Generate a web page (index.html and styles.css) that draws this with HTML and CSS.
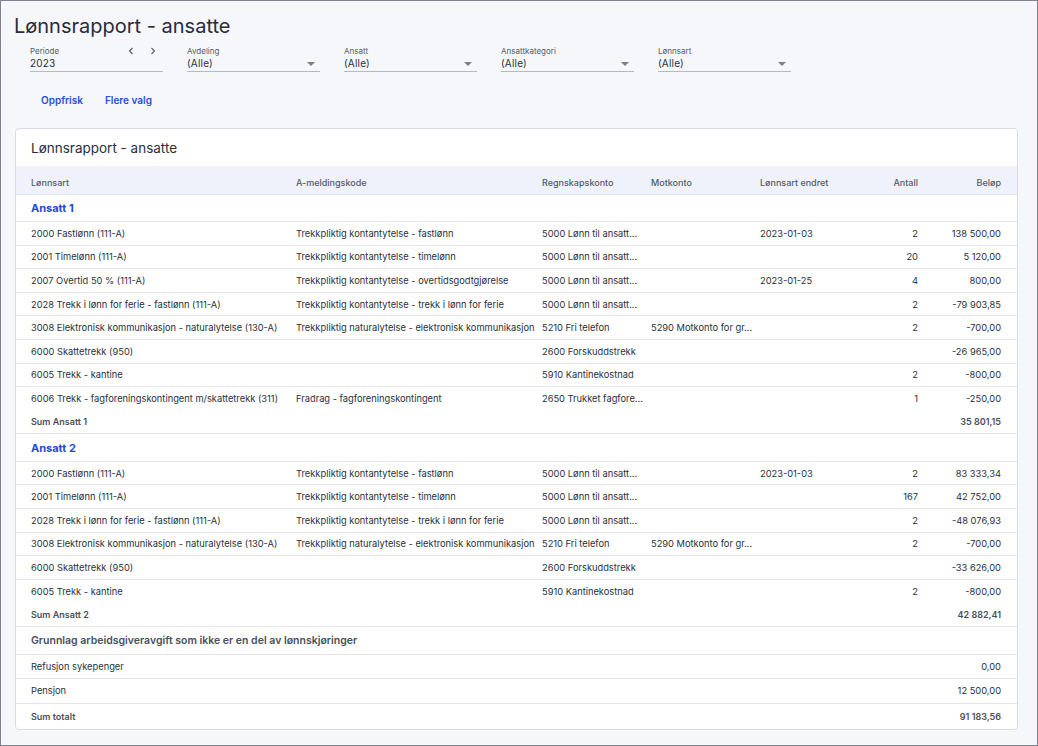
FILE: index.html
```html
<!DOCTYPE html>
<html lang="no">
<head>
<meta charset="utf-8">
<title>Lønnsrapport - ansatte</title>
<link rel="stylesheet" href="styles.css">
</head>
<body>
<div class="frame">
  <h1 class="page-title">Lønnsrapport - ansatte</h1>
  <div class="filters">
    <div class="field">
      <div class="field-label-row">
        <span class="field-label">Periode</span>
        <span class="nav">
          <svg width="6" height="8" viewBox="0 0 6 8"><path d="M4.5 1 L1.5 4 L4.5 7" fill="none" stroke="#555a66" stroke-width="1.1"/></svg>
          <svg width="6" height="8" viewBox="0 0 6 8"><path d="M1.5 1 L4.5 4 L1.5 7" fill="none" stroke="#555a66" stroke-width="1.1"/></svg>
        </span>
      </div>
      <div class="field-value">2023</div>
    </div>
    <div class="field">
      <div class="field-label-row"><span class="field-label">Avdeling</span></div>
      <div class="field-value"><span>(Alle)</span><span class="caret"></span></div>
    </div>
    <div class="field">
      <div class="field-label-row"><span class="field-label">Ansatt</span></div>
      <div class="field-value"><span>(Alle)</span><span class="caret"></span></div>
    </div>
    <div class="field">
      <div class="field-label-row"><span class="field-label">Ansattkategori</span></div>
      <div class="field-value"><span>(Alle)</span><span class="caret"></span></div>
    </div>
    <div class="field">
      <div class="field-label-row"><span class="field-label">Lønnsart</span></div>
      <div class="field-value"><span>(Alle)</span><span class="caret"></span></div>
    </div>
  </div>
  <div class="actions">
    <button class="link-btn">Oppfrisk</button>
    <button class="link-btn">Flere valg</button>
  </div>

  <section class="card">
    <h2 class="card-title">Lønnsrapport - ansatte</h2>
    <table class="report">
      <colgroup>
        <col class="c1"><col class="c2"><col class="c3"><col class="c4"><col class="c5"><col class="c6"><col class="c7">
      </colgroup>
      <thead>
        <tr>
          <th>Lønnsart</th><th>A-meldingskode</th><th>Regnskapskonto</th><th>Motkonto</th><th>Lønnsart endret</th><th class="num">Antall</th><th class="num">Beløp</th>
        </tr>
      </thead>
      <tbody>
        <tr class="group"><td colspan="7">Ansatt 1</td></tr>
        <tr><td>2000 Fastlønn (111-A)</td><td>Trekkpliktig kontantytelse - fastlønn</td><td>5000 Lønn til ansatt...</td><td></td><td>2023-01-03</td><td class="num">2</td><td class="num">138 500,00</td></tr>
        <tr><td>2001 Timelønn (111-A)</td><td>Trekkpliktig kontantytelse - timelønn</td><td>5000 Lønn til ansatt...</td><td></td><td></td><td class="num">20</td><td class="num">5 120,00</td></tr>
        <tr><td>2007 Overtid 50 % (111-A)</td><td>Trekkpliktig kontantytelse - overtidsgodtgjørelse</td><td>5000 Lønn til ansatt...</td><td></td><td>2023-01-25</td><td class="num">4</td><td class="num">800,00</td></tr>
        <tr><td>2028 Trekk i lønn for ferie - fastlønn (111-A)</td><td>Trekkpliktig kontantytelse - trekk i lønn for ferie</td><td>5000 Lønn til ansatt...</td><td></td><td></td><td class="num">2</td><td class="num">-79 903,85</td></tr>
        <tr><td>3008 Elektronisk kommunikasjon - naturalytelse (130-A)</td><td>Trekkpliktig naturalytelse - elektronisk kommunikasjon</td><td>5210 Fri telefon</td><td>5290 Motkonto for gr...</td><td></td><td class="num">2</td><td class="num">-700,00</td></tr>
        <tr><td>6000 Skattetrekk (950)</td><td></td><td>2600 Forskuddstrekk</td><td></td><td></td><td class="num"></td><td class="num">-26 965,00</td></tr>
        <tr><td>6005 Trekk - kantine</td><td></td><td>5910 Kantinekostnad</td><td></td><td></td><td class="num">2</td><td class="num">-800,00</td></tr>
        <tr><td>6006 Trekk - fagforeningskontingent m/skattetrekk (311)</td><td>Fradrag - fagforeningskontingent</td><td>2650 Trukket fagfore...</td><td></td><td></td><td class="num">1</td><td class="num">-250,00</td></tr>
        <tr class="sum"><td colspan="6">Sum Ansatt 1</td><td class="num">35 801,15</td></tr>

        <tr class="group"><td colspan="7">Ansatt 2</td></tr>
        <tr><td>2000 Fastlønn (111-A)</td><td>Trekkpliktig kontantytelse - fastlønn</td><td>5000 Lønn til ansatt...</td><td></td><td>2023-01-03</td><td class="num">2</td><td class="num">83 333,34</td></tr>
        <tr><td>2001 Timelønn (111-A)</td><td>Trekkpliktig kontantytelse - timelønn</td><td>5000 Lønn til ansatt...</td><td></td><td></td><td class="num">167</td><td class="num">42 752,00</td></tr>
        <tr><td>2028 Trekk i lønn for ferie - fastlønn (111-A)</td><td>Trekkpliktig kontantytelse - trekk i lønn for ferie</td><td>5000 Lønn til ansatt...</td><td></td><td></td><td class="num">2</td><td class="num">-48 076,93</td></tr>
        <tr><td>3008 Elektronisk kommunikasjon - naturalytelse (130-A)</td><td>Trekkpliktig naturalytelse - elektronisk kommunikasjon</td><td>5210 Fri telefon</td><td>5290 Motkonto for gr...</td><td></td><td class="num">2</td><td class="num">-700,00</td></tr>
        <tr><td>6000 Skattetrekk (950)</td><td></td><td>2600 Forskuddstrekk</td><td></td><td></td><td class="num"></td><td class="num">-33 626,00</td></tr>
        <tr><td>6005 Trekk - kantine</td><td></td><td>5910 Kantinekostnad</td><td></td><td></td><td class="num">2</td><td class="num">-800,00</td></tr>
        <tr class="sum"><td colspan="6">Sum Ansatt 2</td><td class="num">42 882,41</td></tr>

        <tr class="section"><td colspan="7">Grunnlag arbeidsgiveravgift som ikke er en del av lønnskjøringer</td></tr>
        <tr><td colspan="6">Refusjon sykepenger</td><td class="num">0,00</td></tr>
        <tr class="tall"><td colspan="6">Pensjon</td><td class="num">12 500,00</td></tr>
        <tr class="total"><td colspan="6">Sum totalt</td><td class="num">91 183,56</td></tr>
      </tbody>
    </table>
  </section>
</div>
</body>
</html>
```

FILE: styles.css
```css
* { box-sizing: border-box; }

html, body {
  margin: 0;
  padding: 0;
}

body {
  font-family: Inter, "Noto Sans", "Liberation Sans", sans-serif;
  color: #2b303b;
  background: #f6f7fb;
}

.frame {
  width: 1038px;
  height: 746px;
  border: 1px solid #7d828f;
  background: #f6f7fb;
  padding: 0 19px 0 13px;
  overflow: hidden;
}

.page-title {
  margin: 13px 0 0 0;
  font-size: 20px;
  font-weight: 400;
  line-height: 24px;
  color: #262c3b;
}

.filters {
  display: flex;
  gap: 24px;
  margin: 7px 0 0 16px;
}

.field {
  width: 133px;
  border-bottom: 1px solid #b6b9c1;
  padding-bottom: 1px;
}

.field-label-row {
  display: flex;
  justify-content: space-between;
  align-items: center;
  height: 12px;
}

.field-label {
  font-size: 8px;
  color: #555a66;
}

.nav {
  display: flex;
  gap: 16px;
  margin-right: 7px;
}

.nav svg { display: block; }

.field-value {
  display: flex;
  justify-content: space-between;
  align-items: center;
  font-size: 10px;
  line-height: 13px;
  color: #2b303b;
  letter-spacing: 0.2px;
}

.caret {
  width: 0;
  height: 0;
  border-left: 4px solid transparent;
  border-right: 4px solid transparent;
  border-top: 4px solid #7a7f8a;
  margin-right: 5px;
}

.actions {
  display: flex;
  gap: 2px;
  margin: 18px 0 0 17px;
}

.link-btn {
  background: none;
  border: 0;
  padding: 4px 10px;
  font-family: inherit;
  font-size: 10px;
  font-weight: 600;
  color: #1d4ee0;
  cursor: pointer;
}

.card {
  margin: 18px 0 0 1px;
  width: 1003px;
  background: #fff;
  border: 1px solid #d8dbe1;
  border-radius: 4px;
  overflow: hidden;
}

.card-title {
  margin: 0;
  padding: 0 15px;
  height: 37px;
  display: flex;
  align-items: center;
  font-size: 13.5px;
  font-weight: 400;
  color: #2a2f3a;
}

.report {
  width: 100%;
  border-collapse: collapse;
  table-layout: fixed;
}

.c1 { width: 280px; }
.c2 { width: 246px; }
.c3 { width: 109px; }
.c4 { width: 109px; }
.c5 { width: 102px; }
.c6 { width: 56px; }
.c7 { width: 99px; }

.report th,
.report td {
  padding: 0;
  text-align: left;
  white-space: nowrap;
  overflow: hidden;
}

.report th:first-child,
.report td:first-child { padding-left: 15px; }

.report th:last-child,
.report td:last-child { padding-right: 16px; }

.report .num { text-align: right; }

.report thead th {
  background: #eff2fb;
  height: 28px;
  padding-top: 6px;
  font-size: 9px;
  font-weight: 500;
  color: #555a66;
  border-bottom: 1px solid #e1e4ea;
}

.report tbody td {
  height: 23.6px;
  font-size: 9.3px;
  color: #2b303b;
  border-top: 1px solid #e4e6eb;
}

.report tbody tr.group td {
  height: 27.5px;
  font-size: 11px;
  font-weight: 700;
  color: #1f48cf;
}

.report tbody tr:first-child td { border-top: 0; }

.report tbody tr.sum td {
  border-top: 0;
  font-size: 9px;
  font-weight: 600;
  color: #4a4f5a;
}

.report tbody tr.section td {
  height: 28px;
  font-size: 10.5px;
  font-weight: 600;
  color: #4a4f5a;
}

.report tbody tr.tall td { height: 25px; }

.report tbody tr.total td {
  height: 26px;
  font-size: 9px;
  font-weight: 600;
  color: #4a4f5a;
}
```
